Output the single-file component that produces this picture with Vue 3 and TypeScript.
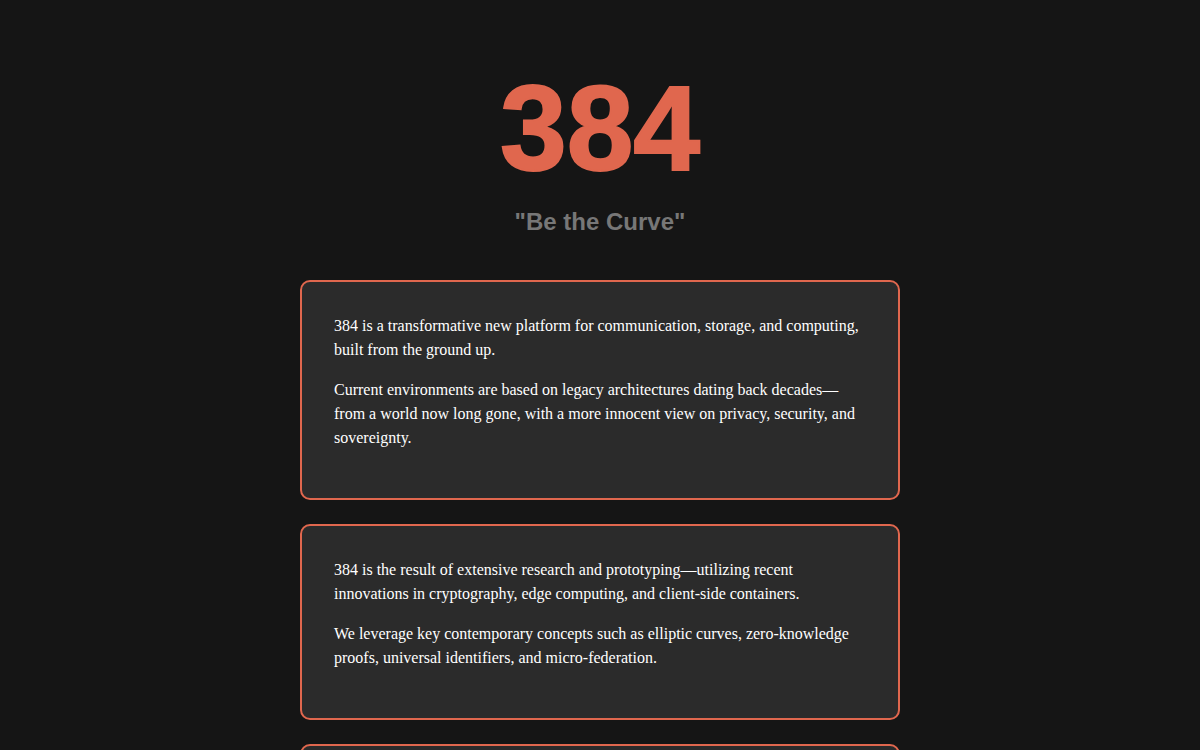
<script setup lang="ts">
interface Card {
  id: string
  paragraphs: string[]
}

const cards: Card[] = [
  {
    id: 'platform',
    paragraphs: [
      '384 is a transformative new platform for communication, storage, and computing, built from the ground up.',
      'Current environments are based on legacy architectures dating back decades—from a world now long gone, with a more innocent view on privacy, security, and sovereignty.',
    ],
  },
  {
    id: 'research',
    paragraphs: [
      '384 is the result of extensive research and prototyping—utilizing recent innovations in cryptography, edge computing, and client-side containers.',
      'We leverage key contemporary concepts such as elliptic curves, zero-knowledge proofs, universal identifiers, and micro-federation.',
    ],
  },
  { id: 'more', paragraphs: [] },
]
</script>

<template>
  <main class="page">
    <header class="hero">
      <h1 class="brand">384</h1>
      <h2 class="tagline">"Be the Curve"</h2>
    </header>
    <section v-for="card in cards" :key="card.id" class="card">
      <p v-for="text in card.paragraphs" :key="text">{{ text }}</p>
    </section>
  </main>
</template>

<style>
body {
  margin: 0;
  background: #151515;
}
</style>

<style scoped>
.page {
  box-sizing: border-box;
  display: flex;
  flex-direction: column;
  gap: 24px;
  max-width: 632px;
  margin: 0 auto;
  padding: 64px 16px 24px;
  color: #fff;
  font: 16px/24px "Liberation Serif", "Times New Roman", serif;
}

.hero {
  display: flex;
  flex-direction: column;
  align-items: center;
  gap: 16px;
  margin-bottom: 20px;
}

.brand {
  margin: 0;
  color: #e0674e;
  font: bold 120px/128px "Liberation Sans", Arial, sans-serif;
  -webkit-text-stroke: 2px #e0674e;
}

.tagline {
  margin: 0;
  color: #777;
  font: bold 24px/28px "Liberation Sans", Arial, sans-serif;
}

.card {
  min-height: 64px;
  padding: 32px;
  border: 2px solid #e0674e;
  border-radius: 10px;
  background: #2b2b2b;
}

.card p {
  margin: 0 0 16px;
}
</style>
